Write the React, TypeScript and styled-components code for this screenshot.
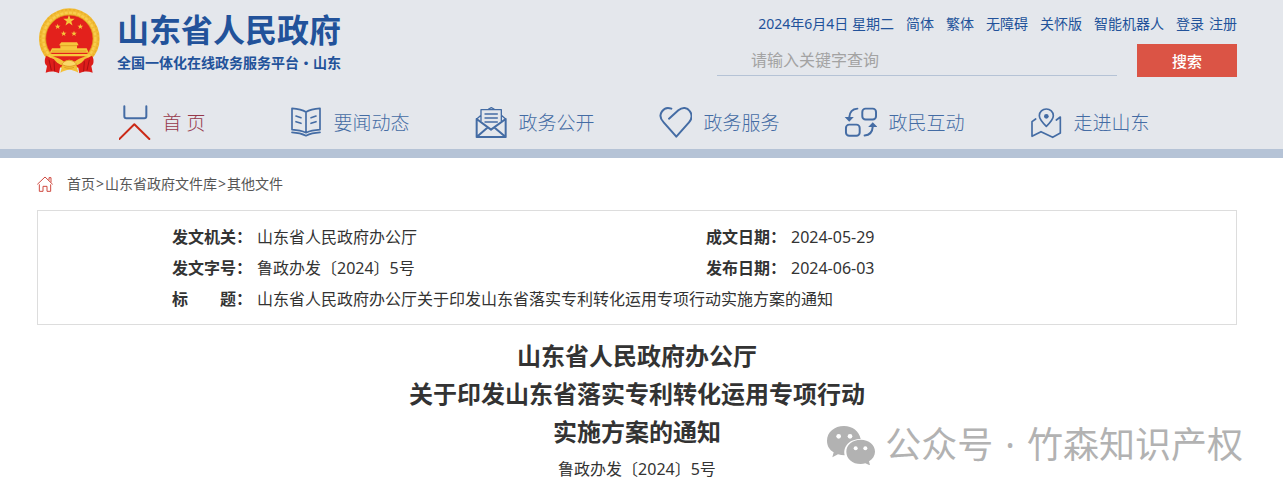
import React from "react";
import styled, { createGlobalStyle } from "styled-components";

const GlobalStyle = createGlobalStyle`
  *, *::before, *::after { box-sizing: border-box; }
  body {
    margin: 0;
    background: #fff;
    color: #333;
    font-family: "Noto Sans", "Noto Sans CJK SC", sans-serif;
    font-size: 16px;
  }
  a { color: inherit; text-decoration: none; }
`;

const Page = styled.div`
  position: relative;
  padding-bottom: 8px;
`;

const Header = styled.header`
  background: #e4e7ec;
  border-bottom: 9px solid #b5c3d6;
  padding: 0 46px 0 37px;
`;

const HeaderTop = styled.div`
  display: flex;
  justify-content: space-between;
  height: 95px;
`;

const Brand = styled.a`
  display: flex;
  align-items: flex-start;
  gap: 17px;
  padding: 8px 0 0 1px;
  color: #22529a;
  font-family: "Noto Sans CJK SC", sans-serif;
  white-space: nowrap;
`;

const BrandText = styled.span`
  display: flex;
  flex-direction: column;
`;

const BrandName = styled.strong`
  font-size: 32px;
  line-height: 40px;
  font-weight: 700;
`;

const BrandSub = styled.span`
  font-size: 14px;
  line-height: 28px;
  font-weight: 700;
`;

const Tools = styled.div`
  display: flex;
  flex-direction: column;
  width: 520px;
  padding-top: 14px;
`;

const QuickLinks = styled.div`
  display: flex;
  justify-content: flex-end;
  gap: 12px;
  font-size: 14px;
  line-height: 20px;
  color: #22529a;
  white-space: nowrap;
`;

const Account = styled.span`
  display: flex;
  gap: 5px;
`;

const SearchForm = styled.form`
  display: flex;
  gap: 20px;
  margin-top: 10px;
`;

const SearchInput = styled.input`
  flex: 1;
  min-width: 0;
  height: 32px;
  padding: 0 0 0 34px;
  border: 0;
  border-bottom: 1px solid #b5c3d6;
  background: transparent;
  font: inherit;
  font-size: 16px;
  outline: none;
  &::placeholder { color: #a3a3a3; opacity: 1; }
`;

const SearchButton = styled.button`
  width: 100px;
  height: 33px;
  border: 0;
  padding: 0;
  background: #db5445;
  color: #fff;
  font: inherit;
  font-size: 15px;
  font-weight: 500;
`;

const Nav = styled.nav`
  display: grid;
  grid-template-columns: repeat(6, 1fr);
  height: 54px;
  padding: 0 55px 0 35px;
`;

const NavLink = styled.a<{ $active?: boolean }>`
  display: flex;
  align-items: center;
  justify-content: center;
  gap: 11px;
  color: ${(p) => (p.$active ? "#96384a" : "#446ca4")};
  font-size: 19px;
  font-weight: 300;
  line-height: 28px;
  white-space: pre;
`;

const NavLabel = styled.span`
  padding-top: 2px;
`;

const NavIcon = styled.svg`
  flex: none;
  width: 33px;
  height: 35px;
  fill: none;
  stroke: #446ca4;
  stroke-width: 6;
  stroke-linecap: round;
  stroke-linejoin: round;
`;

const Main = styled.main`
  padding: 0 46px 0 37px;
`;

const Breadcrumb = styled.nav`
  display: flex;
  align-items: center;
  gap: 14px;
  height: 52px;
  font-size: 14px;
  color: #555;
`;

const Trail = styled.span`
  padding-bottom: 2px;
`;

const Separator = styled.span`
  margin: 0 1px;
`;

const InfoBox = styled.section`
  border: 1px solid #ddd;
  padding: 11px 0 9px 134px;
`;

const InfoTable = styled.table`
  width: 100%;
  table-layout: fixed;
  border-collapse: collapse;
  line-height: 31px;
  text-align: left;
  white-space: nowrap;
  th, td { padding: 0; height: 31px; }
`;

const LabelCol = styled.col`
  width: 85px;
`;

const ValueCol = styled.col`
  width: 449px;
`;

const Article = styled.article`
  padding-top: 12px;
  text-align: center;
`;

const Title = styled.h1`
  margin: 0;
  font-size: 24px;
  line-height: 38px;
  font-weight: 700;
`;

const DocNumber = styled.p`
  margin: 0;
  line-height: 36px;
`;

const Watermark = styled.div`
  position: absolute;
  right: 40px;
  top: 419px;
  display: flex;
  align-items: center;
  gap: 12px;
  color: #b2b2b2;
  font-size: 36px;
  line-height: 52px;
  white-space: nowrap;
`;

const WechatIcon = styled.svg`
  flex: none;
  width: 48px;
  height: 39px;
  margin-right: -2px;
`;

const star = (cx: number, cy: number, r: number) =>
  Array.from({ length: 10 }, (_, i) => {
    const radius = i % 2 ? r * 0.4 : r;
    const a = (Math.PI * i) / 5 - Math.PI / 2;
    return `${(cx + radius * Math.cos(a)).toFixed(1)},${(cy + radius * Math.sin(a)).toFixed(1)}`;
  }).join(" ");

const Emblem = () => (
  <svg width="62" height="67" viewBox="10 9 186 201" aria-hidden="true">
    <circle cx="104" cy="101" r="91" fill="#f2bd35" />
    <circle cx="104" cy="101" r="87" fill="none" stroke="#eaae2a" strokeWidth="4" strokeDasharray="7 5" />
    <circle cx="104" cy="101" r="78" fill="none" stroke="#f9cd4e" strokeWidth="7" strokeDasharray="9 4" />
    <circle cx="104" cy="101" r="71" fill="#e3211c" stroke="#d99a1d" strokeWidth="2" />
    <g fill="#f6c83c">
      <polygon points={star(103, 47, 18)} />
      <polygon points={star(69, 65, 9)} />
      <polygon points={star(137, 65, 9)} />
      <polygon points={star(87, 86, 9)} />
      <polygon points={star(118, 86, 9)} />
      <path d="M80 112h47l5 9h-5v9h29l6 13H45l7-13h25v-9h-4z" />
      <path d="M44 147h118l-3 7H47z" />
    </g>
    <path d="M78 122h51M52 138h103" stroke="#d88e18" strokeWidth="2" />
    <path d="M35 152c18 11 36 13 50 12l4 14-13 10-3 17c-13-7-26-6-40-2l4-20-5-5c-3-9-2-19 3-26zM172 152c-18 11-36 13-50 12l-4 14 13 10 3 17c13-7 26-6 40-2l-4-20 5-5c3-9 2-19-3-26z" fill="#dd1d1a" />
    <path d="M43 164l7 32M58 169l2 30M164 164l-7 32M149 169l-2 30" stroke="#a90f12" strokeWidth="3" fill="none" />
    <path d="M54 156c16 1 27 8 35 15 9-9 21-9 30 0 8-7 19-14 35-15-8 15-19 22-29 25l6 22c-9-5-18-9-27-9s-18 4-27 9l6-22c-10-3-21-10-29-25z" fill="#f4c13a" />
    <path d="M81 178c6-9 14-12 22-12s17 3 23 12c-15 8-30 8-45 0z" fill="#fbd768" stroke="#d48b18" strokeWidth="2" />
    <path d="M89 187c9 4 20 4 29 0" stroke="#d48b18" strokeWidth="2" fill="none" />
  </svg>
);

const HomeMark = () => (
  <NavIcon viewBox="56 30 99 105" aria-hidden="true">
    <path d="M72 34v30q0 6 6 6h54q6 0 6-6V34" />
    <path d="M57 132l45-44 45 44" stroke="#cb2a17" />
  </NavIcon>
);

const BookIcon = () => (
  <NavIcon viewBox="567 30 99 105" aria-hidden="true">
    <g strokeWidth="5">
      <path d="M618 51c-11-7-26-10-42-11v64c16 1 31 4 42 9 11-5 26-8 42-9V40c-16 1-31 4-42 11zM618 52v60" />
      <path d="M588 63l15 5M588 80l15 5M648 63l-15 5M648 80l-15 5M576 112c17 1 30 4 42 10 12-6 25-9 42-10" />
    </g>
  </NavIcon>
);

const MailIcon = () => (
  <NavIcon viewBox="43 30 99 105" aria-hidden="true">
    <path d="M51 72v54h87V72M51 72l43 32 44-32M51 126l32-28M138 126l-33-28" />
    <path d="M52 71l12-10M137 71l-12-10M64 77V44h61v33M87 42l8-4 8 4M76 57h37M76 69h37M76 81h37" strokeWidth="4" />
  </NavIcon>
);

const HeartIcon = () => (
  <NavIcon viewBox="598 30 99 105" aria-hidden="true">
    <path d="M628 71l28-25c13-11 27-8 34 2 8 11 7 24-2 34l-38 43-38-43c-11-11-12-23-5-33 7-10 18-12 28-8" />
  </NavIcon>
);

const ExchangeIcon = () => (
  <NavIcon viewBox="43 30 101 105" aria-hidden="true">
    <rect x="99" y="40" width="42" height="33" rx="10" />
    <rect x="49" y="89" width="42" height="34" rx="10" />
    <path d="M84 40c-14 1-24 11-25 27M106 122c14-1 24-11 25-27" />
    <path d="M45 66h28L59 80zM117 96h28l-14-14z" fill="#446ca4" stroke="none" />
  </NavIcon>
);

const MapIcon = () => (
  <NavIcon viewBox="599 30 99 105" aria-hidden="true">
    <g strokeWidth="5">
      <path d="M651 94c-13-13-21-22-21-32a21 20 0 0 1 42 0c0 10-8 19-21 32z" />
      <path d="M619 72l-11 8v44l27-14 35 17 23-13V66l-12 9" />
    </g>
    <circle cx="651" cy="64" r="7" fill="#446ca4" stroke="none" />
  </NavIcon>
);

const HouseIcon = () => (
  <svg width="16" height="16" viewBox="0 0 48 48" fill="none" stroke="#cf4a40" strokeWidth="3" aria-hidden="true">
    <path d="M1 25L24 3l23 22M36 13V5h6v14M7 25v21h11V31h12v15h11V25" />
  </svg>
);

const quickLinks = ["简体", "繁体", "无障碍", "关怀版", "智能机器人"];

const navItems = [
  { label: "首 页 ", Icon: HomeMark, active: true },
  { label: "要闻动态", Icon: BookIcon },
  { label: "政务公开", Icon: MailIcon },
  { label: "政务服务", Icon: HeartIcon },
  { label: "政民互动", Icon: ExchangeIcon },
  { label: "走进山东", Icon: MapIcon },
];

export default function App() {
  return (
    <Page>
      <GlobalStyle />
      <Header>
        <HeaderTop>
          <Brand href="#">
            <Emblem />
            <BrandText>
              <BrandName>山东省人民政府</BrandName>
              <BrandSub lang="zh-CN">全国一体化在线政务服务平台·山东</BrandSub>
            </BrandText>
          </Brand>
          <Tools>
            <QuickLinks>
              <span>2024年6月4日 星期二</span>
              {quickLinks.map((t) => (
                <a href="#" key={t}>{t}</a>
              ))}
              <Account>
                <a href="#">登录</a>
                <a href="#">注册</a>
              </Account>
            </QuickLinks>
            <SearchForm onSubmit={(e) => e.preventDefault()}>
              <SearchInput type="text" aria-label="搜索" placeholder="请输入关键字查询" />
              <SearchButton type="submit">搜索</SearchButton>
            </SearchForm>
          </Tools>
        </HeaderTop>
        <Nav>
          {navItems.map(({ label, Icon, active }) => (
            <NavLink href="#" key={label} $active={active}>
              <Icon />
              <NavLabel>{label}</NavLabel>
            </NavLink>
          ))}
        </Nav>
      </Header>
      <Main>
        <Breadcrumb>
          <HouseIcon />
          <Trail>
            <a href="#">首页</a>
            <Separator>&gt;</Separator>
            <a href="#">山东省政府文件库</a>
            <Separator>&gt;</Separator>
            <a href="#">其他文件</a>
          </Trail>
        </Breadcrumb>
        <InfoBox>
          <InfoTable lang="zh-CN">
            <colgroup>
              <LabelCol />
              <ValueCol />
              <LabelCol />
              <col />
            </colgroup>
            <tbody>
              <tr>
                <th scope="row">发文机关：</th>
                <td>山东省人民政府办公厅</td>
                <th scope="row">成文日期：</th>
                <td>2024-05-29</td>
              </tr>
              <tr>
                <th scope="row">发文字号：</th>
                <td>鲁政办发〔2024〕5号</td>
                <th scope="row">发布日期：</th>
                <td>2024-06-03</td>
              </tr>
              <tr>
                <th scope="row">标　　题：</th>
                <td colSpan={3}>山东省人民政府办公厅关于印发山东省落实专利转化运用专项行动实施方案的通知</td>
              </tr>
            </tbody>
          </InfoTable>
        </InfoBox>
        <Article>
          <Title>
            山东省人民政府办公厅
            <br />
            关于印发山东省落实专利转化运用专项行动
            <br />
            实施方案的通知
          </Title>
          <DocNumber>鲁政办发〔2024〕5号</DocNumber>
        </Article>
      </Main>
      <Watermark>
        <WechatIcon viewBox="84 45 144 117" aria-hidden="true">
          <path d="M135 45c-29 0-51 19-51 44 0 15 7 27 20 35l-4 15 17-9c6 2 13 3 20 3-6-29 17-49 48-49-4-23-25-39-50-39z" fill="currentColor" />
          <path d="M185 86c-25 0-43 16-43 36 0 21 18 37 43 37 5 0 10-1 14-2l14 6-3-12c11-7 18-17 18-29 0-20-18-36-43-36z" fill="currentColor" />
          <g fill="#fff">
            <circle cx="119" cy="76" r="7" />
            <circle cx="153" cy="76" r="7" />
            <circle cx="170" cy="112" r="6" />
            <circle cx="199" cy="112" r="6" />
          </g>
        </WechatIcon>
        <span>公众号</span>
        <span>·</span>
        <span>竹森知识产权</span>
      </Watermark>
    </Page>
  );
}
